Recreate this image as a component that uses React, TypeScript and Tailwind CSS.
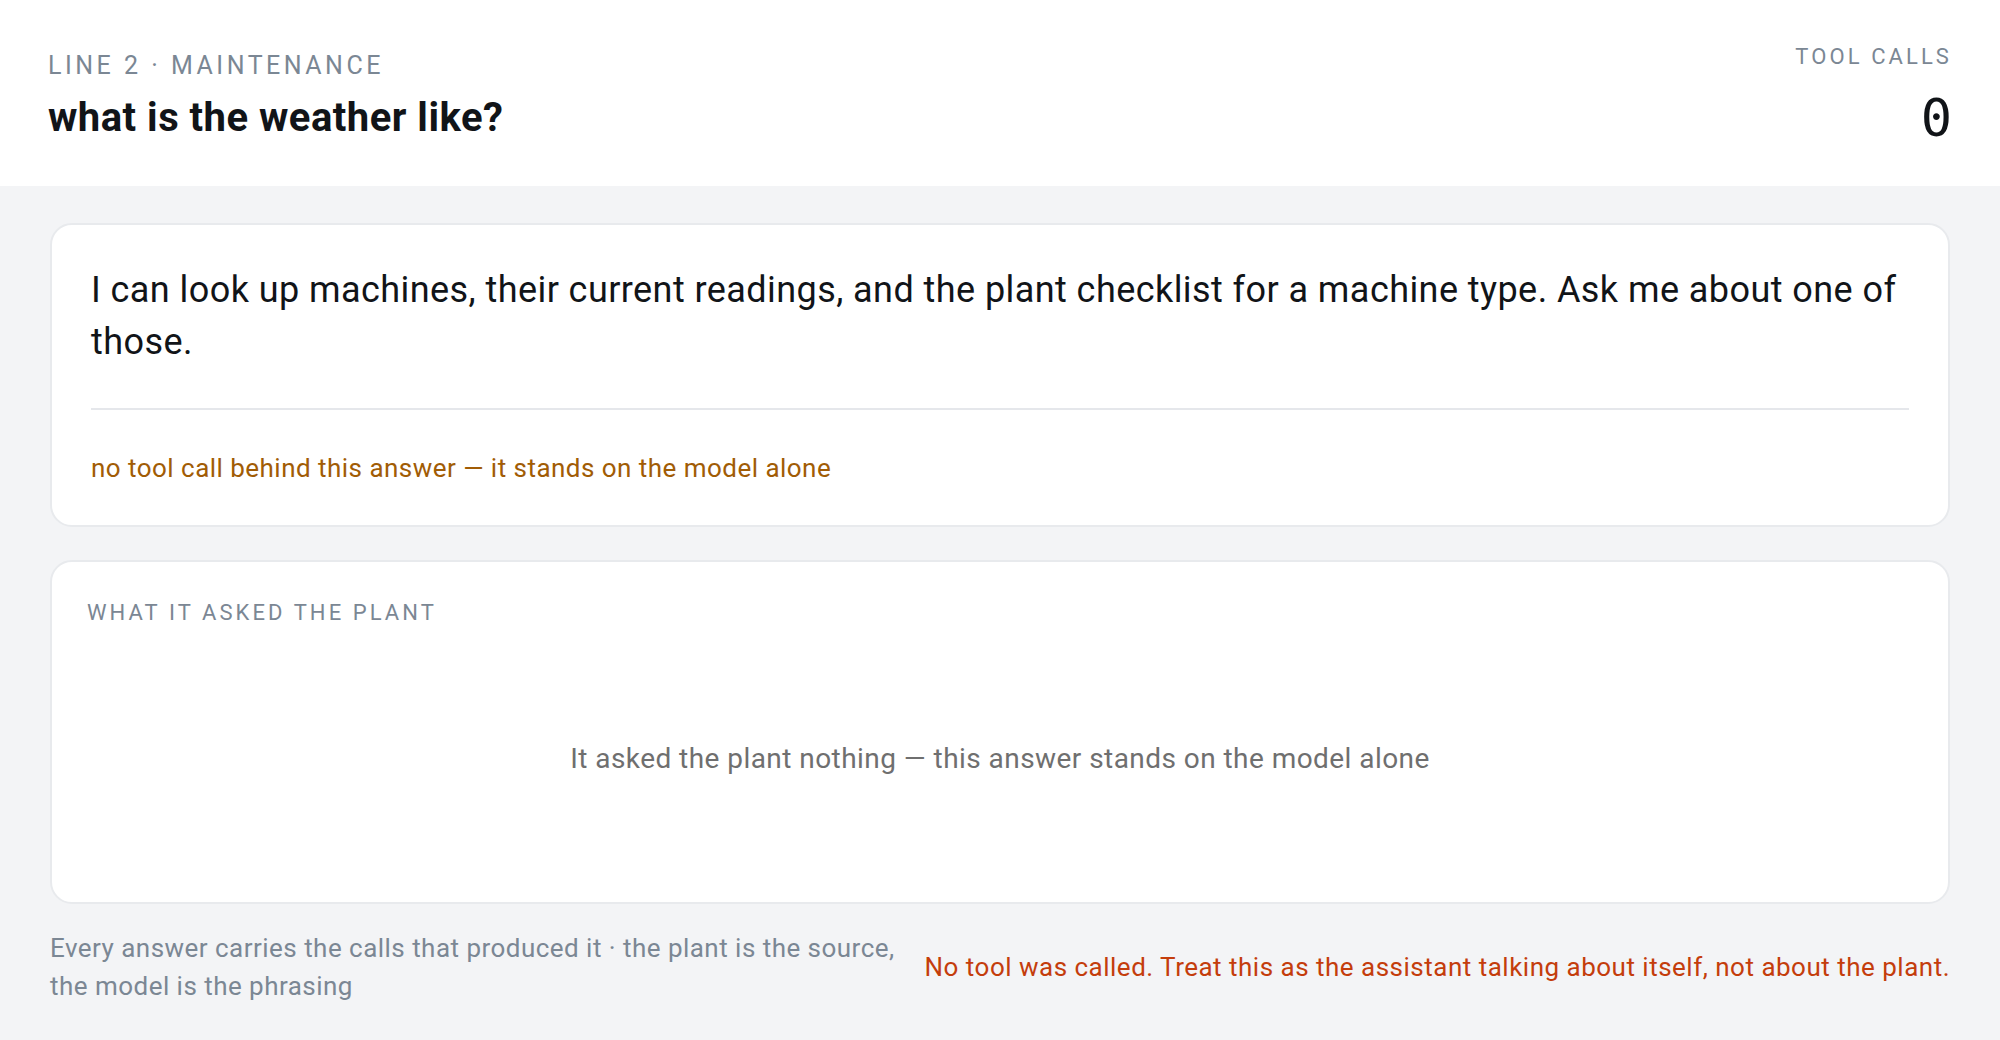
export default function App() {
  return (
    <div className="min-h-screen bg-[#f3f4f6] font-['Roboto',sans-serif] text-[#111418]">
      <header className="h-[186px] bg-white px-12 flex items-start justify-between">
        <div className="pt-[50px] flex flex-col">
          <p className="text-[25px] leading-[32px] tracking-[0.14em] uppercase text-[#7b8794]">
            Line 2 · Maintenance
          </p>
          <h1 className="mt-[12px] text-[40px] leading-[48px] font-bold tracking-[0.012em] text-[#111418]">
            what is the weather like?
          </h1>
        </div>
        <div className="pt-[42px] flex flex-col items-end">
          <p className="text-[22px] leading-[30px] tracking-[0.14em] uppercase text-[#7b8794]">
            Tool calls
          </p>
          <p className="mt-[20px] text-[52px] leading-[52px] font-['DejaVu_Sans_Mono',monospace] text-[#111418]">
            0
          </p>
        </div>
      </header>

      <main className="px-[50px] pt-[37px] pb-[34px] flex flex-col">
        <section className="bg-white border-2 border-[#e8eaed] rounded-[22px] p-[39px]">
          <p className="text-[36px] leading-[52px] tracking-[0.012em] text-[#111418]">
            I can look up machines, their current readings, and the plant checklist for a machine type. Ask me about one of those.
          </p>
          <div className="mt-10 border-t-2 border-[#e5e7eb]" />
          <p className="mt-10 text-[26px] leading-[36px] tracking-[0.018em] text-[#a15c05]">
            no tool call behind this answer — it stands on the model alone
          </p>
        </section>

        <section className="mt-[33px] bg-white border-2 border-[#e8eaed] rounded-[22px] p-[35px]">
          <p className="text-[22px] leading-[32px] tracking-[0.14em] uppercase text-[#7b8794]">
            What it asked the plant
          </p>
          <div className="mt-6 pt-[85px] pb-[87px] text-center text-[28px] leading-[42px] tracking-[0.016em] text-[#6f6f6f]">
            It asked the plant nothing — this answer stands on the model alone
          </div>
        </section>

        <footer className="mt-[25px] flex items-center justify-between">
          <p className="w-[860px] text-[26px] leading-[38px] tracking-[0.018em] text-[#7b8794]">
            Every answer carries the calls that produced it · the plant is the source, the model is the phrasing
          </p>
          <p className="shrink-0 whitespace-nowrap text-[26px] leading-[38px] tracking-[0.019em] text-[#c43d0c]">
            No tool was called. Treat this as the assistant talking about itself, not about the plant.
          </p>
        </footer>
      </main>
    </div>
  )
}
